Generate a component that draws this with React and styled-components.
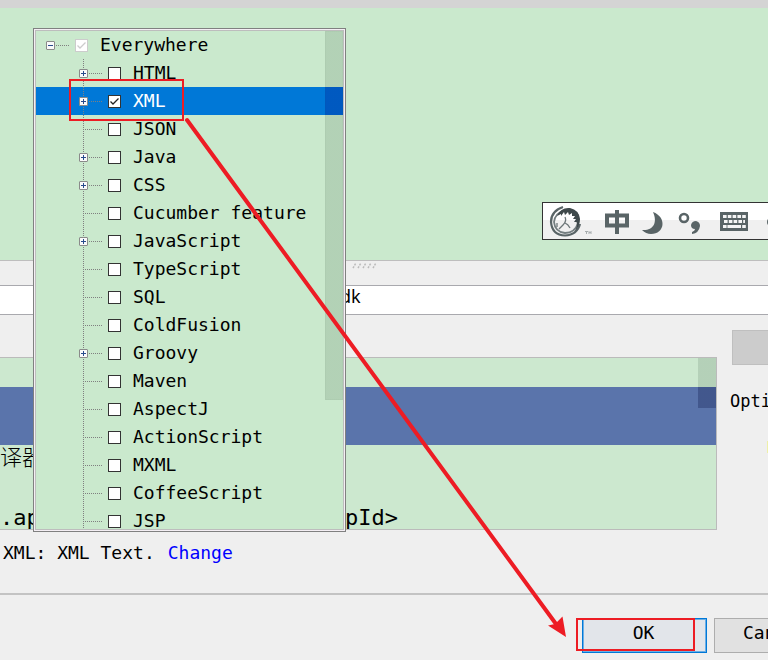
import React from "react";
import styled, { createGlobalStyle, css } from "styled-components";

const mono = '"DejaVu Sans Mono", "Noto Sans CJK SC", monospace';
const green = "#cae9cd";
const red = "#ed1c24";

const GlobalStyle = createGlobalStyle`
  * { box-sizing: border-box; }
  body { margin: 0; background: #efefef; font: 18px/28px ${mono}; color: #000; overflow: hidden; }
  button, input { font: inherit; color: inherit; margin: 0; }
`;

const Page = styled.main`
  position: relative;
  display: flex;
  flex-direction: column;
  min-height: 100vh;
  overflow: hidden;
`;
const Preview = styled.section`
  height: 261px;
  background: ${green};
  border-top: 8px solid #d4d4d4;
  border-bottom: 1px solid #bebebe;
`;
const Splitter = styled.div`
  height: 24px;
  padding-left: 351px;
  svg { display: block; }
`;
const DescriptionInput = styled.input`
  width: 100%;
  height: 30px;
  padding: 0 0 8px 340px;
  border: solid #a9a9ae;
  border-width: 1px 0;
  border-radius: 0;
  background: #fff;
  font-family: "Noto Sans", sans-serif;
  outline: none;
`;
const Columns = styled.div`
  display: grid;
  grid-template-columns: minmax(0, 1fr) 36px;
  gap: 15px;
`;
const Editor = styled.section`
  position: relative;
  height: 173px;
  margin-top: 42px;
  border: solid #bbb;
  border-width: 1px 1px 1px 0;
  background: #cce8cf;
  overflow: hidden;
  font-size: 22px;
`;
const Line = styled.div`
  display: grid;
  grid-template-columns: 345px 1fr;
  height: 29px;
  line-height: ${(p) => (p.$light ? 26 : 29)}px;
  background: ${(p) => (p.$selected ? "#5a74ab" : "transparent")};
  font-weight: ${(p) => (p.$light ? 300 : 400)};
  white-space: nowrap;
`;
const Thumb = styled.div`
  position: absolute;
  top: 0;
  right: 0;
  width: 18px;
  height: 369px;
  border: 1px solid rgba(20, 50, 30, 0.03);
  background: linear-gradient(
    rgba(20, 50, 30, 0.13) 55px,
    rgba(0, 32, 150, 0.35) 55px 83px,
    rgba(20, 50, 30, 0.13) 83px
  );
`;
const EditorThumb = styled(Thumb)`
  height: 50px;
  border: 0;
  background: linear-gradient(rgba(20, 50, 30, 0.13) 29px, rgba(0, 10, 60, 0.27) 29px);
`;
const Side = styled.aside`
  display: flex;
  flex-direction: column;
  align-items: flex-start;
  padding-top: 15px;
  width: 160px;
  font-size: 17px;
`;
const VariablesButton = styled.button`
  width: 140px;
  height: 35px;
  border: 1px solid #bfbfbf;
  background: #ccc;
`;
const SideTitle = styled.div`
  margin: 22px 0 0 -2px;
`;
const OptionMark = styled.i`
  width: 12px;
  height: 12px;
  margin: 26px 0 0 35px;
  background: #eef0a8;
`;
const Status = styled.div`
  display: flex;
  gap: 13px;
  padding: 9px 3px 26px;
  a { color: #00f; text-decoration: none; }
`;
const Footer = styled.footer`
  display: flex;
  justify-content: flex-end;
  gap: 7px;
  padding-top: 23px;
  margin-right: -71px;
  border-top: 2px solid #c3c3c3;
`;
const DialogButton = styled.button`
  width: 125px;
  height: 35px;
  padding: 0 2px 8px 0;
  border: 1px solid ${(p) => (p.$primary ? "#0078d7" : "#adadad")};
  background: ${(p) => (p.$primary ? "#e2e5ea" : "#e1e1e1")};
  ${(p) => p.$primary && css`box-shadow: inset 0 0 0 1px #6caee5;`}
`;

const Popup = styled.section`
  position: absolute;
  left: 33px;
  top: 28px;
  width: 313px;
  height: 504px;
  border: 1px solid #808080;
  background: #f4eff4;
  padding: 1px;
`;
const Tree = styled.div`
  position: relative;
  height: 100%;
  border: 1px solid #bdbdbd;
  background: ${green};
  overflow: hidden;
`;
const Row = styled.div`
  display: flex;
  align-items: center;
  height: 28px;
  padding-left: ${(p) => (p.$root ? 10 : 43)}px;
  background: ${(p) => (p.$selected ? "#0078d7" : "transparent")};
  color: ${(p) => (p.$selected ? "#fff" : "#000")};
`;
const Branch = styled.span`
  display: flex;
  align-items: center;
  align-self: stretch;
  width: 29px;
  padding-top: 1px;
  background:
    repeating-linear-gradient(90deg, #808080 0 1px, transparent 1px 2px) 4px 14px / 19px 1px no-repeat,
    repeating-linear-gradient(#808080 0 1px, transparent 1px 2px) 4px 0 / ${(p) => (p.$root ? 0 : 1)}px 28px no-repeat;
`;
const Expander = styled.button`
  display: block;
  width: 9px;
  height: 9px;
  padding: 0;
  border: 1px solid #8a8a8a;
  border-radius: 1px;
  background: #fafafa;
  svg { display: block; }
`;
const Check = styled.label`
  display: flex;
  align-items: center;
  gap: 12px;
  white-space: pre;
`;
const Box = styled.input`
  appearance: none;
  width: 13px;
  height: 13px;
  margin: 1px 0 0;
  border: 1px solid #333;
  background: #fff;
  &:checked {
    background: #fff url("data:image/svg+xml,%3Csvg xmlns='http://www.w3.org/2000/svg' viewBox='0 0 11 11'%3E%3Cpath d='M1.5 5.5 4 8 9.5 2.5' fill='none' stroke='%23222' stroke-width='1.3'/%3E%3C/svg%3E");
  }
  &:disabled {
    border-color: #ccc;
    background: #fff url("data:image/svg+xml,%3Csvg xmlns='http://www.w3.org/2000/svg' viewBox='0 0 11 11'%3E%3Cpath d='M1.5 5.5 4 8 9.5 2.5' fill='none' stroke='%23ccc' stroke-width='1.3'/%3E%3C/svg%3E");
  }
`;

const ImeBar = styled.div`
  position: absolute;
  top: 202px;
  right: -40px;
  width: 266px;
  height: 38px;
  border: 1px solid #333;
  background: linear-gradient(#fff 17px, #f0f0f0 17px);
  svg { display: block; }
`;
const Annotation = styled.svg`
  position: absolute;
  left: 0;
  top: 0;
  pointer-events: none;
`;

const items = [
  ["HTML", true], ["XML", true], ["JSON"], ["Java", true], ["CSS", true],
  ["Cucumber feature"], ["JavaScript", true], ["TypeScript"], ["SQL"],
  ["ColdFusion"], ["Groovy", true], ["Maven"], ["AspectJ"], ["ActionScript"],
  ["MXML"], ["CoffeeScript"], ["JSP"],
];

function TreeRow({ name, expandable, root, selected }) {
  return (
    <Row $root={root} $selected={selected}>
      <Branch $root={root}>
        {expandable && (
          <Expander aria-label={`${root ? "Collapse" : "Expand"} ${name}`}>
            <svg width="7" height="7" viewBox="0 0 7 7" stroke="#284a8c">
              <path d={root ? "M1 3.5H6" : "M1 3.5H6M3.5 1V6"} />
            </svg>
          </Expander>
        )}
      </Branch>
      <Check>
        <Box type="checkbox" defaultChecked={root || selected} disabled={root} />
        {name}
      </Check>
    </Row>
  );
}

function ImeIcons() {
  return (
    <svg width="264" height="36" viewBox="0 0 264 36" fill="none" stroke="#596466">
      <path d="M20 4Q8 8 8 19Q9 32 22 32.500Q34 32 37 21" strokeWidth="2.2" />
      <path d="M22 7Q12 10 11 19Q12 29 22 30Q32 30 35 20Q37 12 31 8" stroke="#737d7f" strokeWidth="1.8" />
      <path d="M14 13Q18 4 27 5Q36 7 37 16Q37 23 32 28Q35 22 33.500 19L31 19 33 16 30 16 32 13 29 13 29 10 26 12 25 9 22 12 21 9 18 13 18 11Z" fill="#3f494b" stroke="none" />
      <path d="M22 14Q24 18 20 22L16 26M22 20Q25 21 27 25M14 20L14 24" stroke="#6c7678" strokeWidth="1.3" />
      <path d="M42 28.500H45M43.500 28.500V31M46 31V28.500L47 30 48 28.500V31" stroke="#a7adae" />
      <path d="M64 12.500H84V22.500H64ZM74 7V31" strokeWidth="4" />
      <path d="M110 9C124 14 122 31 108 31Q103 31 99 27C110 28 115 20 110 9Z" fill="#596466" stroke="none" />
      <circle cx="141" cy="15" r="4" strokeWidth="2.600" />
      <path d="M148 22Q149 18 153 18Q157 19 157 23Q156 30 149 31V29Q152 28 152 26Q148 26 148 22Z" fill="#596466" stroke="none" />
      <rect x="177" y="9" width="28" height="19" fill="#596466" stroke="none" />
      <path d="M180 13.500H203M181 18.500H202M180 23.500H203" stroke="#f5f5f5" strokeWidth="3" strokeDasharray="3.600 1.200" />
      <path d="M184.500 23.500H197" stroke="#f5f5f5" strokeWidth="3" />
      <circle cx="228" cy="19" r="4" fill="#596466" stroke="none" />
    </svg>
  );
}

export default function App() {
  return (
    <>
      <GlobalStyle />
      <Page>
        <Preview />
        <Splitter>
          <svg width="28" height="9" stroke="#bbb" strokeWidth="1.5" strokeDasharray="2 1">
            <path d="M2 7 5 2M7 7 10 2M12 7 15 2M17 7 20 2M22 7 25 2" />
          </svg>
        </Splitter>
        <DescriptionInput aria-label="Description" defaultValue="dk" />
        <Columns>
          <Editor aria-label="Template text">
            <Line />
            <Line $selected />
            <Line $selected />
            <Line $light><span>译器</span></Line>
            <Line />
            <Line><span>.ap</span><span>pId&gt;</span></Line>
            <EditorThumb />
          </Editor>
          <Side>
            <VariablesButton aria-label="Edit variables" disabled />
            <SideTitle>Options</SideTitle>
            <OptionMark />
          </Side>
        </Columns>
        <Status>
          <span>XML: XML Text.</span>
          <a href="#change">Change</a>
        </Status>
        <Footer>
          <DialogButton $primary>OK</DialogButton>
          <DialogButton>Cancel</DialogButton>
        </Footer>

        <ImeBar><ImeIcons /></ImeBar>

        <Popup aria-label="Contexts">
          <Tree>
            <TreeRow name="Everywhere" root expandable />
            {items.map(([name, expandable]) => (
              <TreeRow key={name} name={name} expandable={expandable} selected={name === "XML"} />
            ))}
            <Thumb />
          </Tree>
        </Popup>

        <Annotation width="768" height="660" viewBox="0 0 768 660" fill="none" stroke={red} strokeWidth="2">
          <rect x="70" y="80" width="113" height="40" />
          <rect x="577" y="619" width="117" height="31" />
          <path d="M187 120 556 624" strokeWidth="4" strokeLinecap="round" />
          <path d="M566 637 548 625.500 555 624 562.500 616.500Z" fill={red} stroke="none" />
        </Annotation>
      </Page>
    </>
  );
}
